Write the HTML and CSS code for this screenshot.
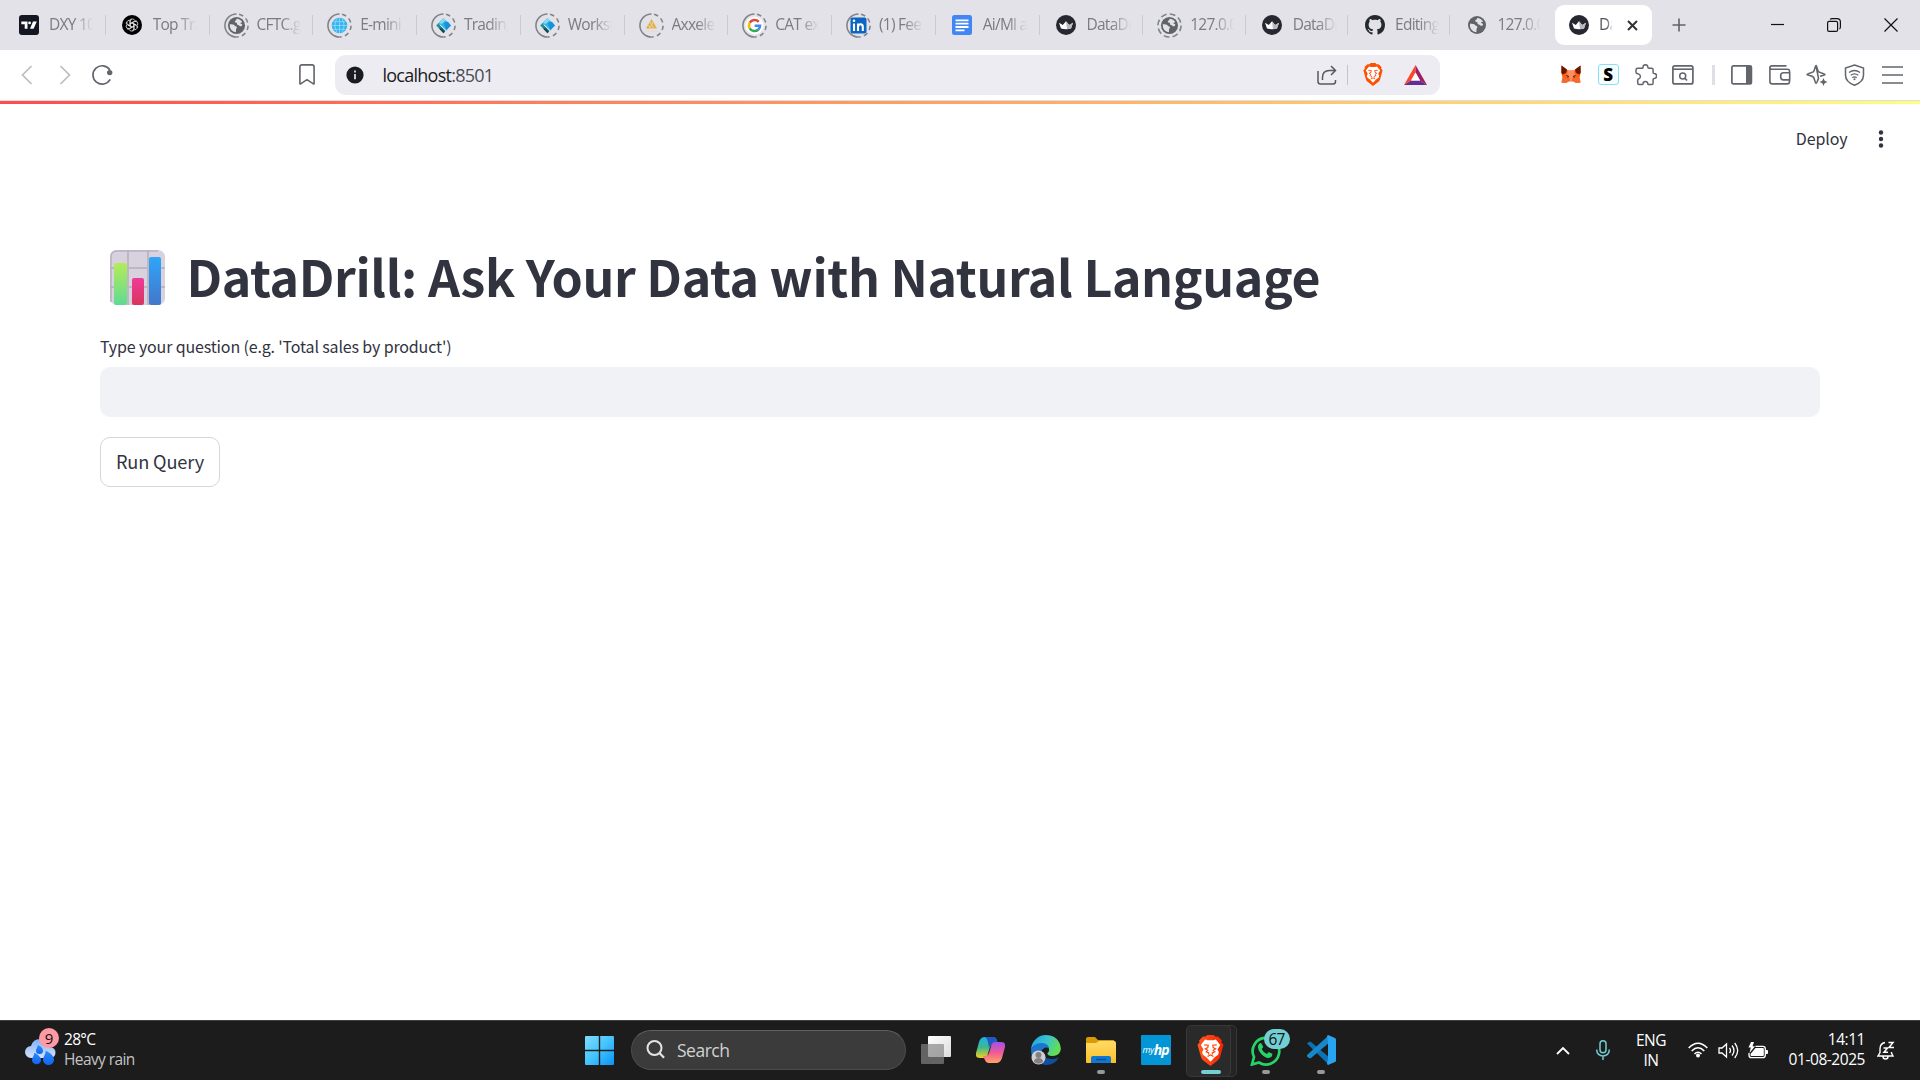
FILE: index.html
```html
<!DOCTYPE html>
<html lang="en">
<head>
<meta charset="utf-8">
<title>DataDrill</title>
<link rel="stylesheet" href="styles.css">
</head>
<body>
<svg class="defs" aria-hidden="true">
  <defs>
    <linearGradient id="gwin" x1="0" y1="0" x2="1" y2="1"><stop offset="0" stop-color="#7fdcff"/><stop offset=".5" stop-color="#43c4fb"/><stop offset="1" stop-color="#0a93fb"/></linearGradient>
    <linearGradient id="ggreen" x1="0" y1="0" x2="0" y2="1"><stop offset="0" stop-color="#b4ec57"/><stop offset="1" stop-color="#5fda93"/></linearGradient>
    <linearGradient id="gpink" x1="0" y1="0" x2="0" y2="1"><stop offset="0" stop-color="#f03a9a"/><stop offset="1" stop-color="#d8365c"/></linearGradient>
    <linearGradient id="gblue" x1="0" y1="0" x2="0" y2="1"><stop offset="0" stop-color="#2fa5f8"/><stop offset="1" stop-color="#4277cc"/></linearGradient>
    <linearGradient id="gdrop" x1="0" y1="0" x2="0" y2="1"><stop offset="0" stop-color="#2c8bf2"/><stop offset="1" stop-color="#0f65f5"/></linearGradient>
    <linearGradient id="gcloud" x1="0" y1="0" x2="0" y2="1"><stop offset="0" stop-color="#7fb0f7"/><stop offset="1" stop-color="#d5e3fa"/></linearGradient>
    <linearGradient id="gcopa" x1="0" y1="0" x2="0" y2="1"><stop offset="0" stop-color="#1cb0ea"/><stop offset=".5" stop-color="#3fb98c"/><stop offset="1" stop-color="#f3cf1c"/></linearGradient>
    <linearGradient id="gcopb" x1="0" y1="0" x2="0" y2="1"><stop offset="0" stop-color="#a250ec"/><stop offset=".5" stop-color="#ee5a97"/><stop offset="1" stop-color="#ffa563"/></linearGradient>
    <linearGradient id="gedge" x1="0" y1="0" x2="1" y2=".4"><stop offset="0" stop-color="#1f9de0"/><stop offset=".5" stop-color="#35c1d6"/><stop offset="1" stop-color="#63dd55"/></linearGradient>
    <linearGradient id="gfolder" x1="0" y1="0" x2="0" y2="1"><stop offset="0" stop-color="#ffdb6b"/><stop offset="1" stop-color="#fbbf24"/></linearGradient>
    <linearGradient id="gbrave" x1="0" y1="0" x2="1" y2="0"><stop offset="0" stop-color="#ff5a1f"/><stop offset="1" stop-color="#f52300"/></linearGradient>
    <linearGradient id="gtask" x1="0" y1="0" x2="1" y2="1"><stop offset="0" stop-color="#fff"/><stop offset="1" stop-color="#dcdcdc"/></linearGradient>
    <symbol id="ring" viewBox="0 0 24 24"><path d="M12 .9A11.1 11.1 0 0 0 12 23.1" fill="none" stroke="#808287" stroke-width="1.5"/><path d="M12 .9A11.1 11.1 0 0 1 12 23.1" fill="none" stroke="#808287" stroke-width="1.5" stroke-dasharray="4.3 3.2" stroke-dashoffset="-2.5"/></symbol>
    <symbol id="ringd" viewBox="0 0 24 24"><circle cx="12" cy="12" r="11.1" fill="none" stroke="#808287" stroke-width="1.5" stroke-dasharray="5.6 3.1"/></symbol>
    <symbol id="globe" viewBox="0 0 20 20"><circle cx="10" cy="10" r="9" fill="#606368"/><path d="M2.9 8.8c2.4.1 4.4 0 5.1 1.3.5 1.1 1.8.5 2.3 1.4.6 1.2-.9 1.5-.8 2.8l-.1 2.9A7.3 7.3 0 0 1 2.9 8.8ZM8.6 4.9c1-.2 1.5-.8 1.4-2 2.7.2 4.9 1.400 6.100 3.600-.3.500-1.700.1-2 .9-.2.900 1.200.7 1.800 1.400.6.600-.1 1.700-.9 2-1.700.4-2-1.100-3.400-1.400-1.100-.2-1.300-.9-1.100-1.800.1-.9-1.900-.6-2.200-1.400-.2-.6 0-1.100.3-1.300Z" fill="#e3e2e8"/></symbol>
    <symbol id="crown" viewBox="0 0 20 20"><circle cx="10" cy="10" r="10" fill="#262730"/><path d="m3 7.700 3.800 2.200L10 6.200l3.200 3.700L17 7.700l-2 5.900q-5 1.300-10 0Z" fill="#fff"/><path d="m10 6.200 3.200 3.700L17 7.700l-2 5.900q-2 .6-4 .7Z" fill="#b9babe"/></symbol>
    <symbol id="cube" viewBox="0 0 20 20"><path d="m10 2 7.800 8-5 5.200L7 9.500 4.500 11 2.400 9.500Z" fill="#30b4e6"/><path d="m10.500 7 4.200-1 3.100 4-5 5Z" fill="#1492de"/><path d="m5.500 7 4.800-5 2.200 2.400-4.600 4Z" fill="#92d9ed"/><path d="m2.400 10 2.800-1.500 7 7.100L10 18.200Z" fill="#278b8b"/><path d="m5.200 13.200 2.800-.7 3.500 3.700L10 18.200Z" fill="#17485c"/><path d="m6 9 6.600 6.500" stroke="#dfeff0" stroke-width="1"/></symbol>
    <symbol id="lion" viewBox="0 0 20 23"><path d="M4.500 1.200h2L7.500 0h5l1 1.200h2L18.500 4 18 5.400l1.600 1.900L17.200 16c-.4 1.400-1 2.300-2.100 3.100L10 23l-5.100-3.900C3.800 18.300 3.200 17.400 2.800 16L.4 7.300 2 5.400 1.500 4Z"/><path d="m6 3.400 2 .5h4l2-.5 3.200 4-2 3.300 1 2-.5 1.900-2.600 2L10 19.800l-3.100-3.200-2.600-2-.5-1.900 1-2-2-3.300Z" fill="#fff"/><path d="m5.300 7.300 3 .3-.3 1.700-1.800 1 1.800 1.100-1.200 1.100 1.900.8-.2 1.200M14.700 7.300l-3 .3.3 1.700 1.800 1-1.800 1.100 1.200 1.100-1.900.8.200 1.200M7.800 16l2.200-1.200 2.200 1.200" fill="none" stroke="#ff4a0c" stroke-width=".9"/></symbol>
    <symbol id="drop" viewBox="0 0 10 13"><path d="M2.500 0C6 1.300 10 4.600 10 8.200A5 4.700 0 0 1 0 8.200C0 5.500 2.600 3.200 2.500 0Z" fill="url(#gdrop)"/></symbol>
  </defs>
</svg>

<header class="tabbar">
  <div class="tabs">
    <div class="tab"><span class="fav"><svg width="20" height="20" viewBox="0 0 20 20"><rect width="20" height="20" rx="3" fill="#131722"/><path d="M2.300 6.500h6.200v7.200H5.700V9.200H2.300Zm11.700 0h3.800l-3.200 7.200H11Z" fill="#fff"/><circle cx="10.600" cy="7.900" r="1.400" fill="#fff"/></svg></span><span class="name">DXY 10</span></div>
    <div class="tab"><span class="fav"><svg width="20" height="20" viewBox="0 0 20 20"><circle cx="10" cy="10" r="10"/><g fill="none" stroke="#fff" stroke-width=".7"><path id="petal" d="M8.300 11V6.300q.3-2 2-2.300 2-.1 2.600 1.600M8.300 8.500l4.200-2.400q1.500-.8 2.700.3"/><use href="#petal" transform="rotate(60 10 10)"/><use href="#petal" transform="rotate(120 10 10)"/><use href="#petal" transform="rotate(180 10 10)"/><use href="#petal" transform="rotate(240 10 10)"/><use href="#petal" transform="rotate(300 10 10)"/></g></svg></span><span class="name">Top Tra</span></div>
    <div class="tab"><span class="fav"><svg width="25" height="25"><use href="#ring"/><use href="#globe" x="3" y="3" width="19" height="19"/></svg></span><span class="name">CFTC.g</span></div>
    <div class="tab"><span class="fav"><svg width="25" height="25" viewBox="0 0 25 25"><use href="#ring"/><circle cx="12.500" cy="12.500" r="7.800" fill="#35b4f0"/><path d="M12.500 5v15M5 12.500h15M6.500 8.700h12M6.500 16.300h12M10 5.500q-4 7 0 14M15 5.500q4 7 0 14" stroke="#90dcfa" fill="none" stroke-width=".8"/></svg></span><span class="name">E-mini</span></div>
    <div class="tab"><span class="fav"><svg width="25" height="25"><use href="#ring"/><use href="#cube" x="3" y="3" width="19" height="19"/></svg></span><span class="name">Trading</span></div>
    <div class="tab"><span class="fav"><svg width="25" height="25"><use href="#ring"/><use href="#cube" x="3" y="3" width="19" height="19"/></svg></span><span class="name">Worksp</span></div>
    <div class="tab"><span class="fav"><svg width="25" height="25" viewBox="0 0 25 25"><use href="#ring"/><path d="M12.500 6 18 15.500H7Z" fill="#e1b045"/><path d="m11 9 4 6.500M9.500 12l2 3.500M14 9l-3 6" stroke="#e9dcc1" stroke-width=".7"/><path d="M6.500 18h12" stroke="#e8dac5"/></svg></span><span class="name">Axxele</span></div>
    <div class="tab"><span class="fav"><svg width="25" height="25" viewBox="0 0 25 25"><use href="#ring"/><circle cx="12.500" cy="12.500" r="9" fill="#fff"/><g fill="none" stroke-width="2.500"><path d="M16.700 8.800A5.600 5.600 0 0 0 7.700 9.700" stroke="#ea4335"/><path d="M7.700 9.700a5.600 5.600 0 0 0 0 5.600" stroke="#fbbc05"/><path d="M7.700 15.300a5.600 5.600 0 0 0 8.700 1.200" stroke="#34a853"/><path d="M16.400 16.500q1.600-1.500 1.700-3.700h-5.400" stroke="#4285f4"/></g></svg></span><span class="name">CAT ex</span></div>
    <div class="tab"><span class="fav"><svg width="25" height="25" viewBox="0 0 25 25"><use href="#ring"/><rect x="4.500" y="4.500" width="16" height="16" rx="2" fill="#0a66c2"/><path d="M8 10.500V18M12 18v-7.500m0 3.500q.2-2.700 2.600-2.700 2.200 0 2.200 2.600V18" stroke="#fff" stroke-width="2.100" fill="none"/><circle cx="8" cy="7.700" r="1.300" fill="#fff"/></svg></span><span class="name">(1) Fee</span></div>
    <div class="tab"><span class="fav"><svg width="20" height="20" viewBox="0 0 20 20"><rect width="20" height="20" rx="2.500" fill="#4285f4"/><path d="M3.500 5.300h13M3.500 8.700h13M3.500 12h13M3.500 15.300h9" stroke="#fff" stroke-width="1.800"/></svg></span><span class="name">Ai/Ml a</span></div>
    <div class="tab"><span class="fav"><svg width="20" height="20"><use href="#crown"/></svg></span><span class="name">DataDr</span></div>
    <div class="tab slim"><span class="fav"><svg width="25" height="25"><use href="#ringd"/><use href="#globe" x="3" y="3" width="19" height="19"/></svg></span><span class="name">127.0.0</span></div>
    <div class="tab slim"><span class="fav"><svg width="20" height="20"><use href="#crown"/></svg></span><span class="name">DataDr</span></div>
    <div class="tab slim"><span class="fav"><svg width="20" height="20" viewBox="0 0 16 16"><path fill="#24292f" d="M8 0C3.580 0 0 3.580 0 8c0 3.540 2.290 6.530 5.470 7.590.4.070.55-.17.55-.38 0-.19-.01-.82-.01-1.490-2.010.37-2.530-.49-2.690-.94-.09-.23-.48-.94-.82-1.130-.28-.15-.68-.52-.01-.53.63-.01 1.080.58 1.230.82.72 1.210 1.870.87 2.330.66.07-.52.28-.87.51-1.070-1.780-.2-3.640-.89-3.640-3.950 0-.87.31-1.590.82-2.150-.08-.2-.36-1.020.08-2.120 0 0 .67-.21 2.200.82.64-.18 1.320-.27 2-.27s1.360.09 2 .27c1.530-1.040 2.200-.82 2.200-.82.44 1.100.16 1.920.08 2.120.51.56.82 1.270.82 2.150 0 3.070-1.870 3.750-3.650 3.950.29.25.54.73.54 1.480 0 1.070-.01 1.930-.01 2.200 0 .21.15.46.55.38A8.010 8.010 0 0 0 16 8c0-4.420-3.580-8-8-8Z"/></svg></span><span class="name">Editing</span></div>
    <div class="tab last"><span class="fav"><svg width="20" height="20"><use href="#globe"/></svg></span><span class="name">127.0.0</span></div>
    <div class="tab active"><span class="fav"><svg width="20" height="20"><use href="#crown"/></svg></span><span class="name">Da</span><svg class="close" width="11" height="11" viewBox="0 0 11 11"><path d="m1 1 9 9m0-9-9 9" stroke="#303238" stroke-width="2"/></svg></div>
  </div>
  <svg class="newtab" width="14" height="14" viewBox="0 0 14 14"><path d="M7 .5v13M.5 7h13" stroke="#606368" stroke-width="1.600"/></svg>
  <div class="wincontrols">
    <svg width="13" height="15" viewBox="0 0 13 15"><path d="M0 6.500h13" stroke="#111" stroke-width="1.200"/></svg>
    <svg width="14" height="14" viewBox="0 0 14 14"><rect x=".6" y="3.400" width="10" height="10" rx="1.500" fill="none" stroke="#111" stroke-width="1.200"/><path d="M3.200 1.600q.5-1 2-1H10q3.400 0 3.400 3.400v5q0 1.500-1 2" fill="none" stroke="#111" stroke-width="1.200"/></svg>
    <svg width="14" height="14" viewBox="0 0 14 14"><path d="m.5.5 13 13m0-13-13 13" stroke="#111" stroke-width="1.200"/></svg>
  </div>
</header>

<nav class="toolbar">
  <div class="nav">
    <svg width="12" height="20" viewBox="0 0 12 20"><path d="m10.500 1-9 9 9 9" fill="none" stroke="#bcbdc1" stroke-width="1.700"/></svg>
    <svg width="12" height="20" viewBox="0 0 12 20"><path d="m1.500 1 9 9-9 9" fill="none" stroke="#bcbdc1" stroke-width="1.700"/></svg>
    <svg width="22" height="22" viewBox="0 0 22 22"><path d="M18.900 6A9.200 9.200 0 1 0 19.200 15.400" fill="none" stroke="#62656b" stroke-width="1.700"/><circle cx="18.700" cy="8.600" r="2.700" fill="#62656b"/></svg>
  </div>
  <svg class="bookmark" width="16" height="21" viewBox="0 0 16 21"><path d="M.9 19.500V3Q.9.900 3 .9h10q2.100 0 2.100 2.100v16.500q0 .8-.7.300L8 15.600l-6.400 4.200q-.7.500-.7-.3Z" fill="none" stroke="#62656b" stroke-width="1.600"/></svg>
  <div class="urlbox">
    <svg class="info" width="18" height="18" viewBox="0 0 18 18"><circle cx="9" cy="9" r="8.600" fill="#1b1c21"/><path d="M9 8v5.300M9 4.500v2" stroke="#dcdce0" stroke-width="1.800"/></svg>
    <span class="url">localhost<span class="port">:8501</span></span>
    <svg class="share" width="20" height="20" viewBox="0 0 20 20"><path d="M1 6v10.500Q1 19 3.500 19H16q2.500 0 2.500-2.500V15M5.500 15v-2.500q0-7 7-7h5.500M14 1l4.500 4.500L14 10" fill="none" stroke="#56595f" stroke-width="1.500"/></svg>
    <span class="divider"></span>
    <svg class="shield" width="20" height="23" fill="#ff5000"><use href="#lion"/></svg>
    <svg width="23" height="20" viewBox="0 0 23 20"><path d="M11.500 0 0 20l7-4.500 4.500-8Z" fill="#ff4724"/><path d="M11.500 0 23 20l-7-4.500-4.500-8Z" fill="#9e1f63"/><path d="M0 20h23l-7-4.500H7Z" fill="#662d91"/><path d="m11.500 7.500 4.500 8H7Z" fill="#fff"/></svg>
  </div>
  <div class="extensions">
    <span><svg width="20" height="19" viewBox="0 0 20 19"><path d="m.5.500 6.500 5h6l6.500-5 .2 7-1.200 5 1 5-4.500.5-2.500-1.500h-5L5 18l-4.500-.5 1-5-1.200-5Z" fill="#ff5c16"/><path d="m.5.500 5.500 4-1 3.500-3.500 1.500L.3 7.500Zm19 0-5.500 4 1 3.500 3.500 1.500 1.200-2Z" fill="#661800"/><path d="m7 5.500-1 4 2 1.500 1 5h2l1-5 2-1.500-1-4Z" fill="#ff8d5d"/><path d="m1.500 12.500 5.500-.5.500 4.500L5 18l-4.500-.5Zm17 0L13 12l-.5 4.500L15 18l4.500-.5Z" fill="#f26b30"/><path d="m5.500 10.500 2.300 1-1.600.8m8.300-1.800-2.300 1 1.600.8" stroke="#333" fill="none"/><path d="M8.500 16h3v1h-3Z" fill="#c0c4cd"/></svg></span>
    <span><b class="sext">S</b></span>
    <span><svg width="22" height="22" viewBox="0 0 22 22"><path d="M2.700 4.300H7q1.100 0 1-1.200a2.400 2.400 0 0 1 4.800 0q0 1.200 1.200 1.200h2.600q1.500 0 1.500 1.500v2.700q0 1 1.100 1.100a2.400 2.400 0 0 1 0 4.800q-1.100 0-1.100 1.100v3.400q0 1.700-1.500 1.700h-3q-.7 0-.8-.8a2.400 2.400 0 0 0-4.800 0q-.1.800-.8.800H4.200q-1.500 0-1.500-1.500V16q0-1 1.200-1.300a2.500 2.500 0 0 0 0-4.600L2 9.500Q1 9.200 1 8V6q0-1.700 1.700-1.700Z" fill="none" stroke="#62656b" stroke-width="1.500" stroke-linejoin="round"/></svg></span>
    <span><svg width="22" height="20" viewBox="0 0 22 20"><rect x=".9" y=".9" width="20" height="18" rx="2" fill="none" stroke="#62656b" stroke-width="1.700"/><path d="M1 4.200h20" stroke="#62656b" stroke-width="1.600"/><circle cx="10.700" cy="11" r="3" fill="none" stroke="#62656b" stroke-width="1.500"/><path d="m12.500 13 2.500 2.500" stroke="#62656b" stroke-width="1.700"/></svg></span>
    <i class="divider"></i>
    <span><svg width="22" height="20" viewBox="0 0 22 20"><rect x=".9" y=".9" width="19.500" height="18" rx="1.500" fill="none" stroke="#62656b" stroke-width="1.700"/><path d="M15 1h6v18h-6Z" fill="#62656b"/></svg></span>
    <span><svg width="22" height="20" viewBox="0 0 22 20"><path d="M20.500 7.500V6q0-1.800-2-1.800H2.500Q.9 4 .9 2.600.9.900 3 .9h14.500M.9 2.600V16.500q0 2.400 2.400 2.400h14.800q2.400 0 2.400-2.400V15M20.700 7.700h-6.200a2.800 2.800 0 0 0-2.800 2.800v1.600a2.800 2.800 0 0 0 2.800 2.800h6.200Z" fill="none" stroke="#62656b" stroke-width="1.600"/></svg></span>
    <span><svg width="22" height="22" viewBox="0 0 22 22"><path d="M10 1.500c1 0 1.200 5 2.600 6.300C14 9.200 19 9.300 19 10.400c0 .9-3 1-5 2m-1.500 1.900c-1 2-1.500 5.200-2.500 5.200s-1.200-5-2.600-6.400C6 11.700 1 11.400 1 10.400s5-1.200 6.400-2.600C8.800 6.500 9 1.500 10 1.500Z" fill="none" stroke="#62656b" stroke-width="1.600"/><path d="m17.500 14 1.200 2.800 2.800 1.200-2.800 1.200-1.200 2.800-1.200-2.800-2.800-1.200 2.800-1.200Z" fill="#62656b"/></svg></span>
    <span><svg width="21" height="22" viewBox="0 0 21 22"><path d="M10.500 1 19.500 4v7q0 7-9 10.200Q1.500 18 1.500 11V4Z" fill="none" stroke="#62656b" stroke-width="1.500"/><path d="M5 8.500q5.500-4 11 0M6.700 11.200q3.800-2.800 7.600 0M8.300 13.600q2.200-1.500 4.400 0" fill="none" stroke="#62656b" stroke-width="1.300"/><circle cx="10.500" cy="15.300" r="1" fill="#62656b"/></svg></span>
    <span><svg width="21" height="18" viewBox="0 0 21 18"><path d="M0 1h21M0 9h21M0 17h21" stroke="#62656b" stroke-width="1.600"/></svg></span>
  </div>
</nav>

<main class="app">
  <div class="decoration"></div>
  <div class="appbar"><span>Deploy</span><svg width="6" height="18" viewBox="0 0 6 18" fill="#31333f"><circle cx="3" cy="2.500" r="2.200"/><circle cx="3" cy="9" r="2.200"/><circle cx="3" cy="15.500" r="2.200"/></svg></div>
  <section class="content">
    <h1><svg width="55" height="55" viewBox="0 0 55 55"><rect width="55" height="55" rx="7" fill="#d8d2df"/><path d="M18 0v55M38 0v55M0 18h55M0 37h55" stroke="#bcb7c2" stroke-width="2"/><path d="M1 52V7Q1 1 7 1h41" fill="none" stroke="#b9b1c3" stroke-width="1.500"/><rect x="4" y="13" width="13" height="42" rx="2" fill="url(#ggreen)"/><rect x="22" y="28" width="12" height="27" rx="2" fill="url(#gpink)"/><rect x="39" y="7" width="12" height="48" rx="2" fill="url(#gblue)"/></svg><span>DataDrill: Ask Your Data with Natural Language</span></h1>
    <label class="question" for="q">Type your question (e.g. 'Total sales by product')</label>
    <input id="q" class="field" type="text">
    <button class="run">Run Query</button>
  </section>
</main>

<footer class="taskbar">
  <div class="weather">
    <div class="wicon"><svg width="31" height="28" viewBox="0 0 31 28"><path d="M6 20a6 6 0 0 1 0-12Q8 1 15 1q8 0 9.500 8 6 .5 6 5.500t-6 5.500Z" fill="url(#gcloud)"/><use href="#drop" x="7" y="14" width="9" height="13"/><use href="#drop" x="18" y="12" width="11" height="16"/><use href="#drop" x="11" y="6" width="7" height="11"/></svg><span class="badge nine">9</span></div>
    <div class="wtext"><div class="temp">28°C</div><div class="cond">Heavy rain</div></div>
  </div>
  <div class="dock">
    <svg class="start" width="29" height="29" viewBox="0 0 29 29"><path d="M0 1q0-1 1-1h12.800v13.800H0Zm15.200-1H28q1 0 1 1v12.800H15.200ZM0 15.200h13.800V29H1q-1 0-1-1Zm15.200 0H29V28q0 1-1 1H15.200Z" fill="url(#gwin)"/></svg>
    <div class="search"><svg width="20" height="20" viewBox="0 0 20 20"><circle cx="8.500" cy="8" r="7" fill="none" stroke="#e4e4e4" stroke-width="2"/><path d="m13.500 13 4.500 4.700" stroke="#e4e4e4" stroke-width="2.200"/></svg><span>Search</span></div>
    <div class="slot"><svg width="30" height="28" viewBox="0 0 30 28"><rect x="7" width="23" height="21" rx="1" fill="url(#gtask)"/><rect y="8" width="23" height="20" rx="1" fill="#858585" fill-opacity=".68"/></svg></div>
    <div class="slot"><svg width="29" height="26" viewBox="0 0 29 26"><path d="M9 0h8q3 0 4 4l1 3h-4q-3 0-4 3l-2.500 8q-1 3-4 3H4q-5 0-4-5L3 5q1.500-5 6-5Z" fill="url(#gcopa)"/><path d="M9 0h8q3 0 4 4l1 3h-4q-4 0-5 4l-1-6q-1-4-3-5Z" fill="#2358bf"/><path d="M20 26h-7q-3 0-4-3l-2-4h2q3 0 4-3l2.500-8q1-3 4-3H25q5 0 4 5l-3 11q-1.500 5-6 5Z" fill="url(#gcopb)"/></svg></div>
    <div class="slot"><svg width="30" height="30" viewBox="0 0 30 30"><path d="M0 15A15 15 0 0 1 15 0q9 0 13 7 3 6 1 10-2 4-8 4-5 0-4.500-3 2-1 1.500-4-1-5-8-5-8 0-10 6Z" fill="url(#gedge)"/><path d="M0 15Q3 8 10 8q7 0 8 5-5-2-7.500 3-2 8 6 11-2 3-8 1Q0 25 0 15Z" fill="#1b76cf"/><path d="M11 15q-1 8 9 9 5 .5 8-2-4 8-13 8-8 0-8-8 0-5 4-7Z" fill="#124f9e"/><circle cx="7.500" cy="22.500" r="7" fill="#d2d0cf"/><circle cx="7.500" cy="20" r="3" fill="#84807e"/><path d="M3 27q0-4 4.500-4t4.500 4q-4.500 3.500-9 0" fill="#84807e"/></svg></div>
    <div class="slot"><svg width="30" height="27" viewBox="0 0 30 27"><path d="M0 10V2q0-2 2-2h7l3 3h16v9Z" fill="#d99a06"/><path d="M0 6h10l3-2h15q2 0 2 2v20H1q-1 0-1-1Z" fill="url(#gfolder)"/><path d="M5 26v-5q0-2 2-2h16q2 0 2 2v5Z" fill="#1276d3"/><path d="M10 22.500h10" stroke="#07518e" stroke-width="1.500"/></svg><i class="dot"></i></div>
    <div class="slot"><div class="myhp"><span>my</span><b>hp</b></div></div>
    <div class="slot current"><svg width="27" height="31" fill="url(#gbrave)" viewBox="0 0 20 23" preserveAspectRatio="none"><use href="#lion"/></svg><i class="dot wide"></i></div>
    <div class="slot"><svg width="31" height="31" viewBox="0 0 31 31"><path d="M2 29.500 4 22A13.300 13.300 0 1 1 9 27.500Z" fill="none" stroke="#25d366" stroke-width="2.700"/><path d="M9.500 8.500q1-.8 2 0l1.700 3.500-1.500 2q1.500 3.500 5.200 5l1.800-2 3.600 1.800q.5 3.700-3.800 4.200C13 22.500 7.500 16 8 11q.3-1.500 1.500-2.500Z" fill="#25d366"/></svg><span class="badge count">67</span><i class="dot"></i></div>
    <div class="slot"><svg width="30" height="30" viewBox="0 0 30 30"><path d="M1 8.500 3 7q1-.5 2 0l19 16-2 6Z" fill="#0b72b5"/><path d="M1 21.500 3 23q1 .5 2 0L24 7l-2-6L1 20Z" fill="#1688cc"/><path d="m22 0 7 3q1 .5 1 1.500v21q0 1-1 1.500l-7 3-1-1 1-6V7l-1-6Z" fill="#27a4f2"/></svg><i class="dot"></i></div>
  </div>
  <div class="tray">
    <svg class="chev" width="14" height="9" viewBox="0 0 14 9"><path d="m1 8 6-6 6 6" fill="none" stroke="#fff" stroke-width="1.800"/></svg>
    <svg class="mic" width="14" height="20" viewBox="0 0 14 20"><rect x="4" y=".8" width="6" height="12" rx="3" fill="none" stroke="#72cdcf" stroke-width="1.500"/><path d="M.8 9.500v1a6.200 5.500 0 0 0 12.400 0v-1M7 16v4" fill="none" stroke="#72cdcf" stroke-width="1.500"/></svg>
    <div class="lang">ENG<br>IN</div>
    <svg class="wifi" width="20" height="16" viewBox="0 0 20 16"><path d="M.7 6Q10-3.500 19.300 6M3.700 9Q10 2.500 16.300 9M6.500 12q3.500-3.500 7 0" fill="none" stroke="#fff" stroke-width="1.600"/><circle cx="10" cy="13.500" r="2" fill="#fff"/></svg>
    <svg class="vol" width="21" height="17" viewBox="0 0 21 17"><path d="M1 6h3l4.500-4v13L4 11H1Z" fill="none" stroke="#fff" stroke-width="1.300"/><path d="M11.500 6q2 2.500 0 5M14 3.500q4 5 0 10M16.700 1q6 7.500 0 15" fill="none" stroke="#fff" stroke-width="1.300"/></svg>
    <svg class="bat" width="20" height="17" viewBox="0 0 20 17"><path d="M7.500 4.300H15q2.300 0 2.300 2.300V13q0 2.700-2.300 2.700H3.300Q1 15.700 1 13v-2" fill="none" stroke="#fff" stroke-width="1.300"/><path d="M7.500 6H15q.8 0 .8 1v6q0 1-.8 1H3.500q-1 0-1-1v-1Z" fill="#fff"/><path d="M18 8h1.200q.8 0 .8 1v2q0 1-.8 1H18ZM3 0 .5 5.500h2.300L1.500 11 7 4.300H4.500L6 0Z" fill="#fff"/></svg>
    <div class="clock">14:11<br>01-08-2025</div>
    <svg class="bell" width="18" height="19" viewBox="0 0 18 19"><path d="M8 1.500Q3 2.500 3 8v3.500L1 15h15l-1.500-3v-1M6 15.500q0 2.500 2.500 2.500t2.500-2.500" fill="none" stroke="#fff" stroke-width="1.400"/><path d="M11.500 1.500H16l-4 5h5M6.500 7h4L7 11.200h4" fill="none" stroke="#fff" stroke-width="1.500"/></svg>
  </div>
</footer>
</body>
</html>
```
FILE: styles.css
```css
* { box-sizing: border-box; }
body {
  margin: 0;
  width: 1920px;
  height: 1080px;
  overflow: hidden;
  display: flex;
  flex-direction: column;
  background: #fff;
  font-family: "Open Sans", "Noto Sans", sans-serif;
}
svg { display: block; flex: none; }
.defs { position: absolute; width: 0; height: 0; }

/* tab strip */
.tabbar { height: 50px; background: #e3e2e8; display: flex; align-items: center; padding-left: 2px; flex: none; }
.tabs { display: flex; height: 50px; align-items: center; }
.tab { width: 103.75px; height: 20px; display: flex; align-items: center; border-right: 1px solid #cccbd1; padding-left: 13px; }
.tab.slim { width: 102.4px; }
.tab.last { width: 104.5px; border-right: 0; }
.fav { width: 27px; display: flex; justify-content: center; flex: none; }
.name {
  width: 45px;
  margin-left: 7px;
  padding-bottom: 2px;
  overflow: hidden;
  white-space: nowrap;
  font-size: 15.5px;
  line-height: 24px;
  letter-spacing: -0.75px;
  color: #7b7c81;
  -webkit-mask-image: linear-gradient(to right, #000 55%, transparent 98%);
  mask-image: linear-gradient(to right, #000 55%, transparent 98%);
}
.tab.active { width: 97px; height: 40px; background: #fff; border: 0; border-radius: 9px; padding-left: 11px; }
.active .name { width: 14px; margin-left: 6px; color: #505257; }
.close { margin-left: 14px; }
.newtab { margin-left: 20px; }
.wincontrols { margin-left: auto; width: 171px; padding: 0 22px; height: 28px; display: flex; align-items: center; justify-content: space-between; }

/* address row */
.toolbar { height: 51px; border-bottom: 1px solid #dcdfe5; display: flex; align-items: center; padding: 0 9px 1px 8px; flex: none; }
.nav { display: flex; align-items: center; }
.nav svg { margin: 0 13px; }
.nav svg:last-child { margin: 0 0 0 7px; }
.bookmark { margin-left: 186px; }
.urlbox { width: 1105px; height: 40px; margin-left: 20px; border-radius: 11px; background: #edecf2; display: flex; align-items: center; padding: 0 13px 0 11px; }
.url { margin-left: 18.5px; font-size: 18px; line-height: 24px; letter-spacing: -0.75px; color: #1b1c21; }
.port { color: #4b4d53; }
.share { margin-left: auto; margin-right: 10px; }
.divider { width: 1px; height: 20px; background: #c3c3c9; }
.shield { margin: 0 21px 0 15px; }
.extensions { margin-left: auto; display: flex; align-items: center; }
.extensions span { width: 37.5px; display: flex; justify-content: center; }
.extensions .divider { width: 3px; margin: 0 9px 0 9.5px; background: #dfdfe5; }
.sext { width: 21px; height: 21px; border: 1px solid #8ddff5; border-radius: 3px; background: #f4feff; color: #000; font: 800 17px/19px "Open Sans", sans-serif; text-align: center; }

/* app page */
.app { height: 919px; flex: none; font-family: "Noto Sans CJK SC", sans-serif; color: #31333f; }
.decoration { height: 3px; background: linear-gradient(90deg, #ff4b4b, #fffd80); }
.appbar { height: 69px; display: flex; justify-content: flex-end; align-items: center; padding-right: 36.5px; font-size: 16px; gap: 30px; }
.appbar span { line-height: 24px; letter-spacing: -0.1px; padding-bottom: 1px; }
.content { padding: 53px 100px 0; display: flex; flex-direction: column; align-items: flex-start; }
h1 { margin: 0; height: 103px; display: flex; align-items: center; font-size: 50px; line-height: 66px; font-weight: 700; padding-left: 10px; white-space: nowrap; }
h1 span { margin-left: 21.5px; padding-bottom: 5px; letter-spacing: -0.37px; }
.question { font-size: 16px; line-height: 24px; margin-top: 5px; white-space: nowrap; letter-spacing: -0.15px; }
.field { width: 1720px; height: 50px; margin-top: 9px; border: 0; border-radius: 10px; background: #f0f2f6; }
.run { width: 120px; height: 50px; margin-top: 20px; padding: 0 0 2px; border: 1px solid #d6d6d9; border-radius: 10px; background: #fff; color: #31333f; font: 400 18.2px/26px "Noto Sans CJK SC", sans-serif; letter-spacing: -0.15px; }

/* taskbar */
.taskbar { height: 60px; flex: none; background: #1c1c1c; border-top: 1px solid #3d4143; color: #fff; display: flex; align-items: center; font-size: 15.5px; padding-bottom: 1px; }
.weather { display: flex; align-items: center; width: 585px; padding-left: 25px; }
.wicon { position: relative; width: 31px; margin-top: 3px; }
.badge { position: absolute; height: 20px; border-radius: 10px; color: #111; text-align: center; line-height: 20px; }
.nine { width: 20px; left: 14px; top: -10px; background: #ff99a4; font-size: 15px; }
.wtext { margin-left: 8px; line-height: 20px; padding-bottom: 3px; }
.temp { letter-spacing: -0.7px; }
.cond { color: #c4c4c4; letter-spacing: -0.6px; }
.dock { display: flex; align-items: center; height: 58px; }
.search { width: 275px; height: 40px; margin: 0 2px 0 17px; border-radius: 20px; border: 1px solid #4c4c4c; border-top-color: #606060; background: #3b3b3b; display: flex; align-items: center; padding-left: 14px; font-size: 17.5px; color: #d2d2d2; letter-spacing: -0.5px; }
.search span { margin-left: 11px; }
.slot { width: 55px; height: 58px; position: relative; display: flex; align-items: center; justify-content: center; }
.dot { position: absolute; bottom: 5px; left: 23.5px; width: 8px; height: 4px; border-radius: 2px; background: #989898; }
.dot.wide { width: 20px; left: 17.5px; background: #72d0d5; }
.myhp { width: 30px; height: 30px; border-radius: 1px; background: #0296d6; display: flex; align-items: center; justify-content: center; font-style: italic; font-size: 9px; letter-spacing: -0.4px; line-height: 16px; }
.myhp b { font-size: 14px; letter-spacing: -1px; }
.current { z-index: 0; }
.current::before, .current::after { content: ""; position: absolute; top: 4px; height: 50px; border: 1px solid #383838; border-radius: 5px; background: #2a2a2a; z-index: -1; }
.current::before { left: 12px; width: 40px; background: #242424; }
.current::after { left: 3px; width: 43px; }
.count { left: 25.5px; top: 8px; width: 26px; background: #72d0d5; font-size: 15.5px; letter-spacing: -0.8px; }
.tray { margin-left: auto; display: flex; align-items: center; line-height: 20px; padding-right: 25px; }
.mic { margin-left: 26px; }
.lang { margin-left: 25px; width: 32px; text-align: center; letter-spacing: -0.6px; padding-bottom: 1px; }
.wifi { margin-left: 21px; }
.vol { margin-left: 10px; }
.bat { margin-left: 9px; }
.clock { margin-left: 15px; width: 82px; text-align: right; white-space: nowrap; letter-spacing: -0.45px; padding-bottom: 2px; }
.bell { margin-left: 12px; }
```
